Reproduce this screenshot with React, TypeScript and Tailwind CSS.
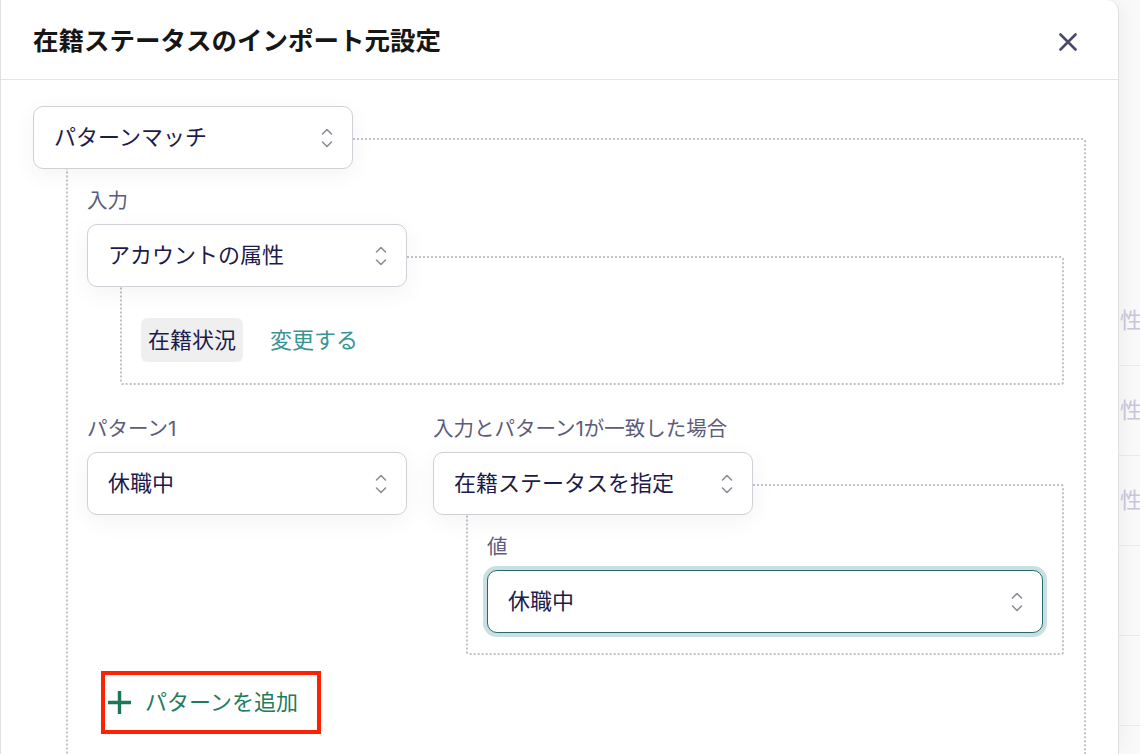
import React from 'react';

const font = "font-['Inter','Noto_Sans_CJK_JP',sans-serif]";

// Up/down chevrons used at the right edge of every select.
const Chevrons: React.FC = () => (
    <svg width="12" height="20" viewBox="0 0 12 20" fill="none" stroke="#8e8d97" strokeWidth="1.6" strokeLinecap="round" strokeLinejoin="round">
        <path d="M1.5 6 6 1.5 10.5 6" />
        <path d="M1.5 14 6 18.5 10.5 14" />
    </svg>
);

interface SelectProps {
    value: string;
    className: string;
    focused?: boolean;
}

const Select: React.FC<SelectProps> = ({ value, className, focused }) => (
    <div
        className={`relative z-10 flex h-[63px] shrink-0 items-center justify-between rounded-[10px] bg-white pl-[20px] pr-[19px] text-[22px] text-[#1c1b4b] ${
            focused
                ? 'border-[1.5px] border-[#2a696b] ring-4 ring-[#c8e0e1]'
                : 'border border-[#d0d0d6] shadow-[0_6px_24px_rgba(0,0,0,0.05)]'
        } ${className}`}
    >
        <span>{value}</span>
        <Chevrons />
    </div>
);

const Label: React.FC<{ children: React.ReactNode }> = ({ children }) => (
    <div className="mb-[11px] text-[20.5px] leading-[24px] text-[#5d5b7c]">{children}</div>
);

export default function App() {
    return (
        <div className={`flex h-[754px] w-[1140px] overflow-hidden bg-[#fafafa] ${font}`}>
            {/* modal */}
            <div className="relative z-10 flex h-[754px] w-[1119px] shrink-0 flex-col overflow-hidden rounded-tr-[12px] border-l border-r border-[#e0e0e4] bg-white shadow-[0_0_24px_rgba(0,0,0,0.07)]">
                <div className="flex h-[80px] shrink-0 items-center justify-between border-b border-[#e4e4e8] pl-[32px] pr-[41px] pt-[4px]">
                    <h2 className="text-[25.5px] font-bold text-[#161616]">在籍ステータスのインポート元設定</h2>
                    <svg width="18" height="18" viewBox="0 0 18 18" fill="none" stroke="#4a4870" strokeWidth="2.6" strokeLinecap="round">
                        <path d="M1.5 1.5 16.5 16.5M16.5 1.5 1.5 16.5" />
                    </svg>
                </div>

                <div className="pl-[32px] pr-[32px] pt-[26px]">
                    <Select value="パターンマッチ" className="w-[320px]" />
                    <div className="-mt-[31px] ml-[33px] rounded-[3px] border-2 border-dotted border-[#c2c2c7] pb-[60px] pl-[19px] pr-[20px] pt-[49px]">
                        <Label>入力</Label>
                        <Select value="アカウントの属性" className="w-[320px]" />
                        <div className="-mt-[31px] ml-[33px] rounded-[3px] border-2 border-dotted border-[#c2c2c7] pb-[21px] pl-[19px] pt-[60px]">
                            <div className="flex items-center text-[22px]">
                                <span className="flex h-[44px] items-center rounded-[6px] bg-[#efeff0] px-[7px] text-[#1c1b4b]">在籍状況</span>
                                <span className="ml-[27px] text-[#3a9494]">変更する</span>
                            </div>
                        </div>

                        <div className="mt-[32px] flex gap-[26px]">
                            <div className="w-[320px] shrink-0">
                                <Label>パターン1</Label>
                                <Select value="休職中" className="w-[320px]" />
                            </div>
                            <div className="flex-1">
                                <Label>入力とパターン1が一致した場合</Label>
                                <Select value="在籍ステータスを指定" className="w-[320px]" />
                                <div className="-mt-[31px] ml-[33px] rounded-[3px] border-2 border-dotted border-[#c2c2c7] pb-[20px] pl-[19px] pr-[19px] pt-[49px]">
                                    <Label>値</Label>
                                    <Select value="休職中" className="w-full" focused />
                                </div>
                            </div>
                        </div>

                        <div className="ml-[14px] mt-[16px] flex h-[63px] w-[220px] items-center gap-[14px] border-[4px] border-[#ff2200] pl-[3px] text-[22px] text-[#1e7d5e]">
                            <svg width="23" height="23" viewBox="0 0 23 23" fill="none" stroke="#1b7858" strokeWidth="3.4">
                                <path d="M11.5 0v23M0 11.5h23" />
                            </svg>
                            <span>パターンを追加</span>
                        </div>
                    </div>
                </div>
            </div>

            {/* page behind the modal, only its right edge shows */}
            <div className="flex flex-1 flex-col pt-[276px] text-[22px] text-[#c9c7db]">
                {['性', '性', '性', '', ''].map((t, i) => (
                    <div key={i} className="flex h-[90px] shrink-0 items-center overflow-hidden border-b border-[#ececf0] pl-[1px]">
                        {t}
                    </div>
                ))}
            </div>
        </div>
    );
}
